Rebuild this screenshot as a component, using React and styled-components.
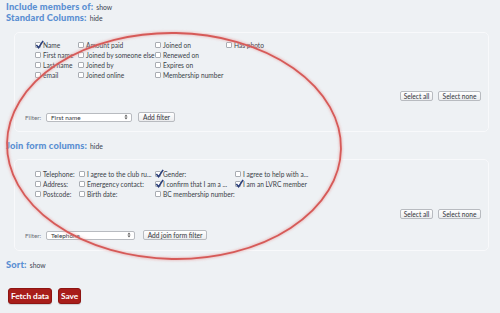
import React from "react";
import styled, { createGlobalStyle } from "styled-components";

const Global = createGlobalStyle`
  html, body { margin: 0; padding: 0; background: #eef1f4; }
  body { font-family: "Lato", "Open Sans", sans-serif; }
  #root { min-height: 313px; }
`;

const Page = styled.div`
  position: relative;
  width: 500px;
  height: 313px;
  overflow: hidden;
  background: #eef1f4;
  padding-top: 1px;
  box-sizing: border-box;
`;

const Heading = styled.div`
  display: flex;
  align-items: baseline;
  gap: 3px;
  height: 11px;
  line-height: 11px;
  padding-left: 6px;
  margin-top: ${(p) => p.$mt || 0}px;
`;

const Title = styled.span`
  font-family: "Lato", sans-serif;
  font-weight: 900;
  font-size: 9.3px;
  color: #5a8fd2;
  letter-spacing: 0.15px;
`;

const Toggle = styled.span`
  font-size: 6.8px;
  color: #3a4150;
`;

const Panel = styled.div`
  margin: ${(p) => p.$mt}px 11px 0 14px;
  border: 1px solid #f8f9fb;
  border-radius: 5px;
  padding: ${(p) => p.$pt}px 7px ${(p) => p.$pb}px 10px;
  display: flex;
  flex-direction: column;
`;

const Grid = styled.div`
  display: grid;
  grid-template-columns: ${(p) => p.$cols};
  grid-auto-rows: ${(p) => p.$row}px;
  margin-left: 10px;
`;

const Item = styled.label`
  display: flex;
  align-items: center;
  gap: 2px;
  font-size: 6.6px;
  color: #3a3f48;
  white-space: nowrap;
`;

const Box = styled.span`
  width: 6px;
  height: 6px;
  border: 1px solid #a9adb3;
  border-radius: 1px;
  background: #fff;
  position: relative;
  flex: none;
  box-sizing: border-box;
`;

const Tick = styled.svg`
  position: absolute;
  left: -1px;
  top: -3px;
  width: 9px;
  height: 9px;
`;

const Actions = styled.div`
  display: flex;
  justify-content: flex-end;
  gap: 5px;
  margin-top: ${(p) => p.$mt}px;
`;

const SmallButton = styled.button`
  all: unset;
  display: inline-flex;
  align-items: center;
  justify-content: center;
  height: 10px;
  padding: 0 4px;
  box-sizing: border-box;
  border: 1px solid #b8bbc0;
  border-radius: 2px;
  background: linear-gradient(#ffffff, #ebecee);
  font-family: "Lato", sans-serif;
  font-size: 6.6px;
  color: #33363c;
  white-space: nowrap;
  width: ${(p) => p.$w}px;
  flex: none;
`;

const FilterRow = styled.div`
  display: flex;
  align-items: center;
  margin-top: ${(p) => p.$mt}px;
  height: 10px;
`;

const FilterLabel = styled.span`
  font-size: 6.4px;
  color: #6b7078;
  width: 21px;
`;

const Select = styled.div`
  width: ${(p) => p.$w}px;
  height: 9px;
  box-sizing: border-box;
  border: 1px solid #b8bbc0;
  border-radius: 2px;
  background: #fff;
  display: flex;
  align-items: center;
  justify-content: space-between;
  padding: 0 3px 0 4px;
  font-size: 6.4px;
  color: #33363c;
  margin-right: ${(p) => p.$mr}px;
`;

const Arrows = styled.svg`
  width: 4px;
  height: 6px;
`;

const ActionRow = styled.div`
  display: flex;
  gap: 6px;
  margin: 18px 0 0 8px;
`;

const RedButton = styled.button`
  all: unset;
  height: 16px;
  padding: 0 2px;
  box-sizing: border-box;
  background: #a81d1a;
  border: 1px solid #8e1512;
  border-radius: 3px;
  color: #fff;
  font-family: "Lato", sans-serif;
  font-weight: 700;
  font-size: 8.4px;
  line-height: 14px;
  letter-spacing: -0.1px;
  box-shadow: 0 1px 1px rgba(0,0,0,0.15);
`;

const Overlay = styled.svg`
  position: absolute;
  left: 0;
  top: 0;
  width: 500px;
  height: 313px;
  pointer-events: none;
`;

function Check({ label, checked }) {
  return (
    <Item>
      <Box>
        {checked && (
          <Tick viewBox="0 0 10 10">
            <path d="M1.5 5.5 L4 8.5 L9 1" fill="none" stroke="#2a3f7a" strokeWidth="1.8" />
          </Tick>
        )}
      </Box>
      {label}
    </Item>
  );
}

const SelectArrows = () => (
  <Arrows viewBox="0 0 4 6">
    <path d="M0.5 2.4 L2 0.6 L3.5 2.4 Z M0.5 3.6 L2 5.4 L3.5 3.6 Z" fill="#555" />
  </Arrows>
);

const standard = [
  ["Name", true], ["Amount paid"], ["Joined on"], ["Has photo"],
  ["First name"], ["Joined by someone else"], ["Renewed on"], [""],
  ["Last name"], ["Joined by"], ["Expires on"], [""],
  ["email"], ["Joined online"], ["Membership number"], [""],
];

const joinForm = [
  ["Telephone:"], ["I agree to the club ru..."], ["Gender:", true], ["I agree to help with a..."],
  ["Address:"], ["Emergency contact:"], ["I confirm that I am a ...", true], ["I am an LVRC member", true],
  ["Postcode:"], ["Birth date:"], ["BC membership number:"], [""],
];

export default function App() {
  return (
    <Page>
      <Global />
      <Heading>
        <Title>Include members of:</Title>
        <Toggle>show</Toggle>
      </Heading>
      <Heading>
        <Title>Standard Columns:</Title>
        <Toggle>hide</Toggle>
      </Heading>

      <Panel $mt={9} $pt={7} $pb={9}>
        <Grid $cols="43px 77px 71px 1fr" $row={10}>
          {standard.map(([l, c], i) =>
            l ? <Check key={i} label={l} checked={c} /> : <span key={i} />
          )}
        </Grid>
        <Actions $mt={11}>
          <SmallButton $w={33}>Select all</SmallButton>
          <SmallButton $w={43}>Select none</SmallButton>
        </Actions>
        <FilterRow $mt={11}>
          <FilterLabel>Filter:</FilterLabel>
          <Select $w={86} $mr={6}>
            First name
            <SelectArrows />
          </Select>
          <SmallButton $w={37}>Add filter</SmallButton>
        </FilterRow>
      </Panel>

      <Heading $mt={8}>
        <Title>Join form columns:</Title>
        <Toggle>hide</Toggle>
      </Heading>

      <Panel $mt={8} $pt={9} $pb={10}>
        <Grid $cols="44px 76px 80px 1fr" $row={10}>
          {joinForm.map(([l, c], i) =>
            l ? <Check key={i} label={l} checked={c} /> : <span key={i} />
          )}
        </Grid>
        <Actions $mt={10}>
          <SmallButton $w={33}>Select all</SmallButton>
          <SmallButton $w={43}>Select none</SmallButton>
        </Actions>
        <FilterRow $mt={11}>
          <FilterLabel>Filter:</FilterLabel>
          <Select $w={89} $mr={8}>
            Telephone
            <SelectArrows />
          </Select>
          <SmallButton $w={64}>Add join form filter</SmallButton>
        </FilterRow>
      </Panel>

      <Heading $mt={8}>
        <Title>Sort:</Title>
        <Toggle>show</Toggle>
      </Heading>

      <ActionRow>
        <RedButton>Fetch data</RedButton>
        <RedButton>Save</RedButton>
      </ActionRow>

      <Overlay viewBox="0 0 500 313">
        <defs>
          <filter id="glow" x="-10%" y="-10%" width="120%" height="120%">
            <feGaussianBlur stdDeviation="0.8" />
          </filter>
        </defs>
        <ellipse cx="174" cy="146" rx="167" ry="113" transform="rotate(1 174 146)" fill="none" stroke="#e7a3a3" strokeWidth="3.5" opacity="0.6" filter="url(#glow)" />
        <ellipse cx="174" cy="146" rx="167" ry="113" transform="rotate(1 174 146)" fill="none" stroke="#d65a58" strokeWidth="1.8" />
      </Overlay>
    </Page>
  );
}
